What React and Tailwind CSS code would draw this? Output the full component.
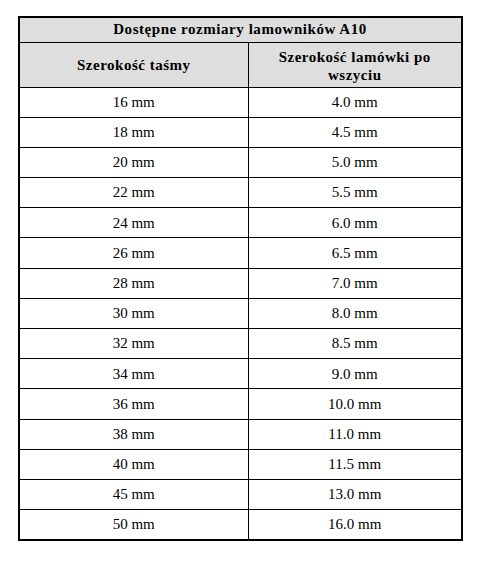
const rozmiary = [
  ['16 mm', '4.0 mm'],
  ['18 mm', '4.5 mm'],
  ['20 mm', '5.0 mm'],
  ['22 mm', '5.5 mm'],
  ['24 mm', '6.0 mm'],
  ['26 mm', '6.5 mm'],
  ['28 mm', '7.0 mm'],
  ['30 mm', '8.0 mm'],
  ['32 mm', '8.5 mm'],
  ['34 mm', '9.0 mm'],
  ['36 mm', '10.0 mm'],
  ['38 mm', '11.0 mm'],
  ['40 mm', '11.5 mm'],
  ['45 mm', '13.0 mm'],
  ['50 mm', '16.0 mm'],
];

export default function App() {
  return (
    <div className="h-[563px] w-[480px] bg-white pt-[16px] font-['Liberation_Serif',serif] text-[15px] text-black">
      <table className="mx-auto w-[445px] table-fixed border-collapse border-2 border-black">
        <colgroup>
          <col className="w-[230px]" />
          <col />
        </colgroup>
        <thead>
          <tr className="h-[25px] bg-[#dedede]">
            <th colSpan={2} className="border border-black text-center font-bold leading-none tracking-[0.55px]">
              Dostępne rozmiary lamowników A10
            </th>
          </tr>
          <tr className="h-[45px] bg-[#dedede]">
            <th className="border border-black text-center font-bold leading-[18px] tracking-[0.5px]">
              Szerokość taśmy
            </th>
            <th className="border border-black px-4 pt-[2px] text-center font-bold leading-[18px] tracking-[0.5px]">
              Szerokość lamówki po wszyciu
            </th>
          </tr>
        </thead>
        <tbody>
          {rozmiary.map(([tasma, lamowka]) => (
            <tr key={tasma} className="h-[30.2px]">
              <td className="border border-black text-center">{tasma}</td>
              <td className="border border-black text-center">{lamowka}</td>
            </tr>
          ))}
        </tbody>
      </table>
    </div>
  );
}
